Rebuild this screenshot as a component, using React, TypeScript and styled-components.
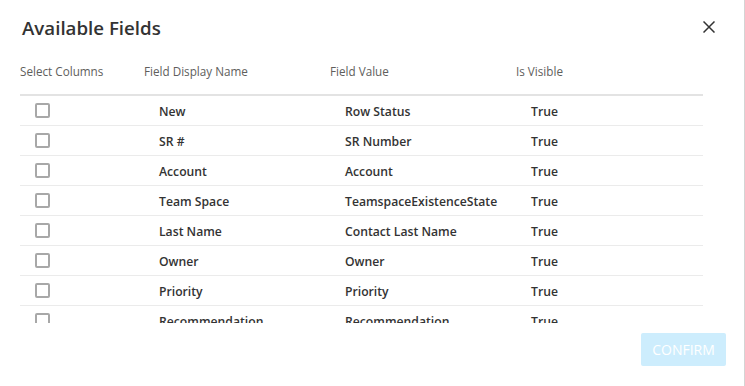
import React from "react";
import styled, { createGlobalStyle } from "styled-components";

const Global = createGlobalStyle`
  html, body { margin: 0; padding: 0; background: #fff; }
  body { font-family: "Open Sans", "Noto Sans", sans-serif; }
  * { box-sizing: border-box; }
`;

const Dialog = styled.div`
  width: 745px;
  height: 386px;
  border-right: 1px solid #d4d4d4;
  background: #fff;
  display: flex;
  flex-direction: column;
  overflow: hidden;
`;

const TitleBar = styled.div`
  display: flex;
  align-items: flex-start;
  justify-content: space-between;
  height: 55px;
  padding: 14px 29px 0 22px;
`;

const Title = styled.h1`
  margin: 0;
  font-size: 18.7px;
  line-height: 28px;
  font-weight: 600;
  color: #333;
`;

const CloseButton = styled.button`
  border: none;
  background: transparent;
  padding: 0;
  margin-top: 7px;
  width: 12px;
  height: 12px;
  display: flex;
  cursor: pointer;
`;

const Table = styled.div`
  margin: 0 41px 0 20px;
  display: flex;
  flex-direction: column;
`;

const Columns = "124px 186px 186px 1fr";

const HeaderRow = styled.div`
  display: grid;
  grid-template-columns: ${Columns};
  height: 41px;
  padding-top: 6px;
  border-bottom: 2px solid #e3e3e3;
`;

const HeaderCell = styled.div`
  font-size: 11.7px;
  line-height: 20px;
  color: #605e5c;
`;

const Body = styled.div`
  height: 227px;
  overflow: hidden;
`;

const Row = styled.div`
  display: grid;
  grid-template-columns: ${Columns};
  align-items: center;
  height: 30px;
  border-bottom: 1px solid #ebebeb;
`;

const Cell = styled.div`
  padding: 2px 0 0 15px;
  font-size: 12.2px;
  font-weight: 600;
  color: #333;
  white-space: nowrap;
`;

const CheckCell = styled.div`
  padding-left: 15px;
  display: flex;
  align-items: center;
`;

const Checkbox = styled.span`
  width: 15px;
  height: 15px;
  border: 2px solid #a8a8a8;
  border-radius: 2px;
  margin-top: -1px;
`;

const Footer = styled.div`
  display: flex;
  justify-content: flex-end;
  padding: 10px 18px 0 0;
`;

const ConfirmButton = styled.button`
  width: 85px;
  height: 33px;
  border: none;
  border-radius: 2px;
  background: #cdedfd;
  color: #fff;
  font-family: inherit;
  font-size: 14px;
  padding: 0;
`;

const rows = [
  ["New", "Row Status", "True"],
  ["SR #", "SR Number", "True"],
  ["Account", "Account", "True"],
  ["Team Space", "TeamspaceExistenceState", "True"],
  ["Last Name", "Contact Last Name", "True"],
  ["Owner", "Owner", "True"],
  ["Priority", "Priority", "True"],
  ["Recommendation", "Recommendation", "True"],
];

export default function App() {
  return (
    <>
      <Global />
      <Dialog>
        <TitleBar>
          <Title>Available Fields</Title>
          <CloseButton aria-label="Close">
            <svg width="12" height="12" viewBox="0 0 12 12">
              <path d="M0.5 0.5 L11.5 11.5 M11.5 0.5 L0.5 11.5" stroke="#333" strokeWidth="1.5" fill="none" />
            </svg>
          </CloseButton>
        </TitleBar>
        <Table>
          <HeaderRow>
            <HeaderCell>Select Columns</HeaderCell>
            <HeaderCell>Field Display Name</HeaderCell>
            <HeaderCell>Field Value</HeaderCell>
            <HeaderCell>Is Visible</HeaderCell>
          </HeaderRow>
          <Body>
            {rows.map((r) => (
              <Row key={r[0]}>
                <CheckCell>
                  <Checkbox />
                </CheckCell>
                <Cell>{r[0]}</Cell>
                <Cell>{r[1]}</Cell>
                <Cell>{r[2]}</Cell>
              </Row>
            ))}
          </Body>
        </Table>
        <Footer>
          <ConfirmButton disabled>CONFIRM</ConfirmButton>
        </Footer>
      </Dialog>
    </>
  );
}
